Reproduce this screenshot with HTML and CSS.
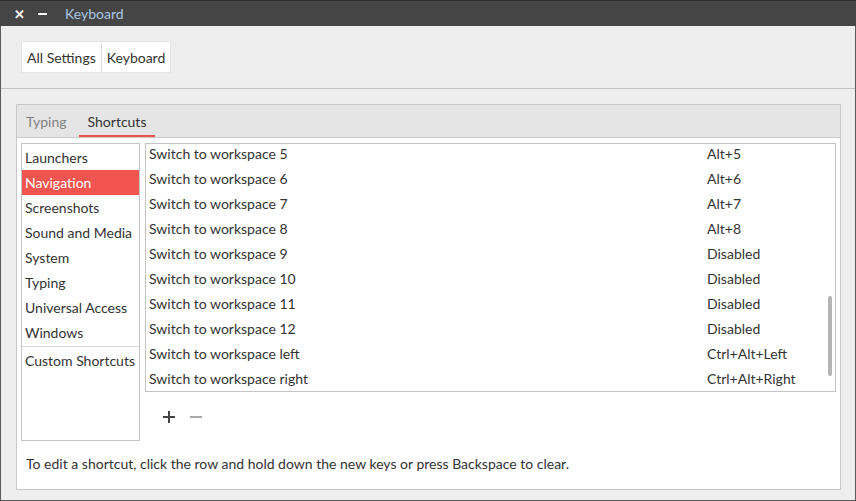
FILE: index.html
```html
<!DOCTYPE html>
<html>
<head>
<meta charset="utf-8">
<link rel="stylesheet" href="styles.css">
</head>
<body>
<div class="window">
  <div class="titlebar">
    <span class="tb-btn close">✕</span>
    <span class="tb-btn min"><svg width="10" height="10" viewBox="0 0 10 10"><rect x="0" y="4" width="9" height="2" fill="#fff"/></svg></span>
    <span class="title">Keyboard</span>
  </div>
  <div class="toolbar">
    <div class="crumbs">
      <span class="crumb">All Settings</span>
      <span class="crumb">Keyboard</span>
    </div>
  </div>
  <div class="main">
    <div class="notebook">
      <div class="tabs">
        <span class="tab">Typing</span>
        <span class="tab active">Shortcuts</span>
      </div>
      <div class="page">
        <div class="columns">
          <div class="sidebar">
            <div class="cat">Launchers</div>
            <div class="cat selected">Navigation</div>
            <div class="cat">Screenshots</div>
            <div class="cat">Sound and Media</div>
            <div class="cat">System</div>
            <div class="cat">Typing</div>
            <div class="cat">Universal Access</div>
            <div class="cat">Windows</div>
            <div class="sep"></div>
            <div class="cat custom">Custom Shortcuts</div>
          </div>
          <div class="right">
            <div class="list">
              <div class="rows">
                <div class="row"><span class="name">Switch to workspace 5</span><span class="accel">Alt+5</span></div>
                <div class="row"><span class="name">Switch to workspace 6</span><span class="accel">Alt+6</span></div>
                <div class="row"><span class="name">Switch to workspace 7</span><span class="accel">Alt+7</span></div>
                <div class="row"><span class="name">Switch to workspace 8</span><span class="accel">Alt+8</span></div>
                <div class="row"><span class="name">Switch to workspace 9</span><span class="accel">Disabled</span></div>
                <div class="row"><span class="name">Switch to workspace 10</span><span class="accel">Disabled</span></div>
                <div class="row"><span class="name">Switch to workspace 11</span><span class="accel">Disabled</span></div>
                <div class="row"><span class="name">Switch to workspace 12</span><span class="accel">Disabled</span></div>
                <div class="row"><span class="name">Switch to workspace left</span><span class="accel">Ctrl+Alt+Left</span></div>
                <div class="row"><span class="name">Switch to workspace right</span><span class="accel">Ctrl+Alt+Right</span></div>
              </div>
              <div class="scrollbar"></div>
            </div>
            <div class="actions">
              <svg class="act" width="12" height="12" viewBox="0 0 12 12"><rect x="5" y="0" width="2" height="12" fill="#444"/><rect x="0" y="5" width="12" height="2" fill="#444"/></svg>
              <svg class="act" width="12" height="12" viewBox="0 0 12 12"><rect x="0" y="5" width="12" height="2" fill="#aaa"/></svg>
            </div>
          </div>
        </div>
        <div class="hint">To edit a shortcut, click the row and hold down the new keys or press Backspace to clear.</div>
      </div>
    </div>
  </div>
</div>
</body>
</html>
```

FILE: styles.css
```css
* { box-sizing: border-box; }
html, body { margin: 0; padding: 0; }
body {
  width: 856px;
  height: 501px;
  overflow: hidden;
  font-family: "Source Sans Pro", "Lato", "Noto Sans", sans-serif;
  font-size: 14px;
  color: #333;
}
.window {
  width: 856px;
  height: 501px;
  background: #eeeeee;
  border-left: 1px solid #5a5a5a;
  border-right: 1px solid #5a5a5a;
  border-bottom: 1px solid #5a5a5a;
  display: flex;
  flex-direction: column;
}
.titlebar {
  height: 26px;
  background: #454545;
  border-top: 1px solid #2e2e2e;
  display: flex;
  align-items: center;
  color: #fff;
  margin: 0 -1px;
}
.tb-btn {
  width: 12px;
  display: flex;
  justify-content: center;
  align-items: center;
  font-size: 13px;
  font-weight: bold;
}
.close { margin-left: 13px; }
.min { margin-left: 12px; }
.title {
  margin-left: 16px;
  color: #a9c6e3;
  font-size: 14px;
}
.toolbar {
  height: 63px;
  border-bottom: 1px solid #c4c4c4;
  padding: 15px 0 0 20px;
}
.crumbs {
  display: inline-flex;
  height: 32px;
  background: #fff;
  border: 1px solid #e4e4e4;
  border-radius: 2px;
}
.crumb {
  display: flex;
  align-items: center;
  padding: 0 5px;
  color: #333;
}
.crumb + .crumb { border-left: 1px solid #dcdcdc; }
.main {
  flex: 1;
  padding: 15px 14px 10px 15px;
}
.notebook {
  height: 100%;
  border: 1px solid #c8c8c8;
  display: flex;
  flex-direction: column;
}
.tabs {
  height: 33px;
  background: #e5e5e5;
  border-bottom: 1px solid #c8c8c8;
  display: flex;
  gap: 3px;
}
.tab {
  padding: 0 9px;
  display: flex;
  align-items: center;
  color: #828282;
}
.tab.active {
  color: #333;
  box-shadow: inset 0 -2px 0 #ef514c;
}
.page {
  flex: 1;
  background: #fff;
  display: flex;
  flex-direction: column;
  padding: 5px 4px 0 4px;
}
.columns {
  display: flex;
  gap: 5px;
}
.sidebar {
  width: 119px;
  height: 298px;
  border: 1px solid #c4c4c4;
  padding-top: 1px;
}
.cat {
  height: 25px;
  line-height: 25px;
  padding-left: 3px;
  white-space: nowrap;
}
.cat.selected {
  background: #f2544f;
  color: #fff;
}
.sep {
  height: 1px;
  background: #d6d6d6;
  margin: 1px 0 1px 0;
}
.right {
  flex: 1;
  display: flex;
  flex-direction: column;
}
.list {
  position: relative;
  height: 249px;
  border: 1px solid #c4c4c4;
  overflow: hidden;
}
.rows {
  margin-top: -3px;
}
.row {
  height: 25px;
  display: flex;
  align-items: center;
  padding-left: 3px;
}
.name { width: 558px; }
.scrollbar {
  position: absolute;
  right: 3px;
  top: 152px;
  width: 4px;
  height: 80px;
  border-radius: 2px;
  background: #b4b4b4;
}
.actions {
  display: flex;
  gap: 15px;
  padding: 19px 0 0 18px;
}
.hint {
  margin-top: 14px;
  padding-left: 5px;
}
```
